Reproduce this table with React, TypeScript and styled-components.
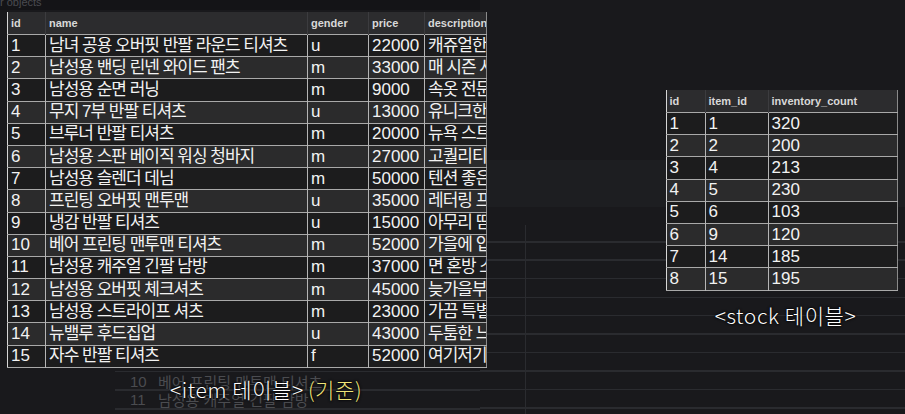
import React from 'react';
import styled, { createGlobalStyle } from 'styled-components';

const GlobalStyle = createGlobalStyle`
  html, body {
    margin: 0;
    padding: 0;
    background: #19191c;
  }
  body {
    font-family: "Liberation Sans", "Noto Sans CJK KR", sans-serif;
  }
`;

// Fundo: tela escura com linhas de grade do editor por trás
const Page = styled.div`
  position: relative;
  width: 905px;
  height: 414px;
  overflow: hidden;
  display: flex;
  align-items: flex-start;
  background:
    repeating-linear-gradient(to bottom, transparent 0 17px, #2a2b2f 17px 18.5px) 480px 224px / 425px 190px no-repeat,
    repeating-linear-gradient(to bottom, transparent 0 3px, #2a2b2f 3px 4.5px, transparent 4.5px 18.5px) 115px 368px / 365px 46px no-repeat,
    linear-gradient(#2a2b2f, #2a2b2f) 525px 225px / 1px 189px no-repeat,
    linear-gradient(#1d1e21, #1d1e21) 486px 160px / 419px 47px no-repeat,
    linear-gradient(#141417, #141417) 0 0 / 480px 10px no-repeat,
    #19191c;
`;

const TopStrip = styled.div`
  position: absolute;
  top: -4px;
  left: 0;
  font-size: 11px;
  color: #4a4b50;
  white-space: nowrap;
`;

const LeftColumn = styled.div`
  position: relative;
  width: 479px;
  margin: 12px 0 0 7px;
  display: flex;
  flex-direction: column;
`;

const RightColumn = styled.div`
  width: 231px;
  margin: 90px 8px 0 auto;
  display: flex;
  flex-direction: column;
  align-items: center;
`;

// Tabelas
const Table = styled.table<{ $width: number }>`
  width: ${({ $width }) => $width}px;
  border-collapse: collapse;
  table-layout: fixed;
  border-left: 1px solid #d6d6d6;
  border-right: 1px solid #8a8a8a;
`;

const HeadCell = styled.th`
  height: 22px;
  padding: 0 0 0 3px;
  background: #2c2c2e;
  color: #d8d8d8;
  font-size: 11px;
  font-weight: 600;
  text-align: left;
  border-left: 1px solid #3c3c3f;
  white-space: nowrap;
  overflow: hidden;

  &:first-child {
    border-left: none;
  }
`;

const Row = styled.tr<{ $odd: boolean }>`
  background: ${({ $odd }) => ($odd ? '#1c1c1d' : '#2b2b2c')};
  border-top: 1.5px solid #a9a9a9;

  &:last-child {
    border-bottom: 1.5px solid #a9a9a9;
  }
`;

const Cell = styled.td<{ $ko?: boolean }>`
  height: 21.2px;
  padding: 0 0 0 3px;
  color: #f2f2f2;
  font-size: 17px;
  line-height: 20px;
  letter-spacing: ${({ $ko }) => ($ko ? '-1px' : '0')};
  border-left: 1.5px solid #b5b5b5;
  white-space: nowrap;
  overflow: hidden;

  &:first-child {
    border-left: none;
  }
`;

// Tabela fantasma do fundo
const GhostRows = styled.div`
  margin: 4px 0 0 108px;
  display: flex;
  flex-direction: column;
`;

const GhostRow = styled.div`
  display: flex;
  height: 18.5px;
  align-items: center;
  color: #4b4c50;
  font-size: 15px;
`;

const GhostId = styled.span`
  width: 43px;
  padding-left: 15px;
  box-sizing: border-box;
`;

// Legendas escritas à mão
const Caption = styled.div`
  font-family: "Noto Sans CJK KR", "Liberation Sans", sans-serif;
  font-size: 21px;
  font-weight: 300;
  color: #ffffff;
  letter-spacing: 0.6px;
  text-shadow: 0 0 3px #000, 0 0 2px #000;
  white-space: nowrap;
`;

const ItemCaption = styled(Caption)`
  position: absolute;
  left: 163px;
  top: 362px;
`;

const StockCaption = styled(Caption)`
  margin-top: 9px;
  margin-left: 8px;
`;

const Highlight = styled.span`
  color: #efe57a;
  margin-left: 4px;
`;

const items: (string | number)[][] = [
  [1, '남녀 공용 오버핏 반팔 라운드 티셔츠', 'u', 22000, '캐쥬얼한 디자인'],
  [2, '남성용 밴딩 린넨 와이드 팬츠', 'm', 33000, '매 시즌 사랑받는'],
  [3, '남성용 순면 러닝', 'm', 9000, '속옷 전문 브랜드'],
  [4, '무지 7부 반팔 티셔츠', 'u', 13000, '유니크한 디자인'],
  [5, '브루너 반팔 티셔츠', 'm', 20000, '뉴욕 스트릿 감성'],
  [6, '남성용 스판 베이직 워싱 청바지', 'm', 27000, '고퀄리티 원단'],
  [7, '남성용 슬렌더 데님', 'm', 50000, '텐션 좋은 데님'],
  [8, '프린팅 오버핏 맨투맨', 'u', 35000, '레터링 프린팅'],
  [9, '냉감 반팔 티셔츠', 'u', 15000, '아무리 땀을'],
  [10, '베어 프린팅 맨투맨 티셔츠', 'm', 52000, '가을에 입기 좋은'],
  [11, '남성용 캐주얼 긴팔 남방', 'm', 37000, '면 혼방 소재'],
  [12, '남성용 오버핏 체크셔츠', 'm', 45000, '늦가을부터'],
  [13, '남성용 스트라이프 셔츠', 'm', 23000, '가끔 특별한'],
  [14, '뉴밸루 후드집업', 'u', 43000, '두툼한 느낌'],
  [15, '자수 반팔 티셔츠', 'f', 52000, '여기저기 자수'],
];

const stock = [
  [1, 1, 320],
  [2, 2, 200],
  [3, 4, 213],
  [4, 5, 230],
  [5, 6, 103],
  [6, 9, 120],
  [7, 14, 185],
  [8, 15, 195],
];

const App: React.FC = () => {
  return (
    <>
      <GlobalStyle />
      <Page>
        <TopStrip>r objects</TopStrip>
        <LeftColumn>
          <Table $width={479}>
            <colgroup>
              <col style={{ width: 38 }} />
              <col style={{ width: 262 }} />
              <col style={{ width: 61 }} />
              <col style={{ width: 56 }} />
              <col style={{ width: 62 }} />
            </colgroup>
            <thead>
              <tr>
                <HeadCell>id</HeadCell>
                <HeadCell>name</HeadCell>
                <HeadCell>gender</HeadCell>
                <HeadCell>price</HeadCell>
                <HeadCell>description</HeadCell>
              </tr>
            </thead>
            <tbody>
              {items.map((it, i) => (
                <Row key={i} $odd={i % 2 === 0}>
                  {it.map((v, j) => (
                    <Cell key={j} $ko={j === 1 || j === 4}>
                      {v}
                    </Cell>
                  ))}
                </Row>
              ))}
            </tbody>
          </Table>
          <GhostRows>
            <GhostRow>
              <GhostId>10</GhostId>베어 프린팅 맨투맨 티셔츠
            </GhostRow>
            <GhostRow>
              <GhostId>11</GhostId>남성용 캐주얼 긴팔 남방
            </GhostRow>
          </GhostRows>
          <ItemCaption>
            &lt;item 테이블&gt;<Highlight>(기준)</Highlight>
          </ItemCaption>
        </LeftColumn>
        <RightColumn>
          <Table $width={231}>
            <colgroup>
              <col style={{ width: 39 }} />
              <col style={{ width: 63 }} />
              <col style={{ width: 129 }} />
            </colgroup>
            <thead>
              <tr>
                <HeadCell>id</HeadCell>
                <HeadCell>item_id</HeadCell>
                <HeadCell>inventory_count</HeadCell>
              </tr>
            </thead>
            <tbody>
              {stock.map((s, i) => (
                <Row key={i} $odd={i % 2 === 0}>
                  {s.map((v, j) => (
                    <Cell key={j}>{v}</Cell>
                  ))}
                </Row>
              ))}
            </tbody>
          </Table>
          <StockCaption>&lt;stock 테이블&gt;</StockCaption>
        </RightColumn>
      </Page>
    </>
  );
};

export default App;
